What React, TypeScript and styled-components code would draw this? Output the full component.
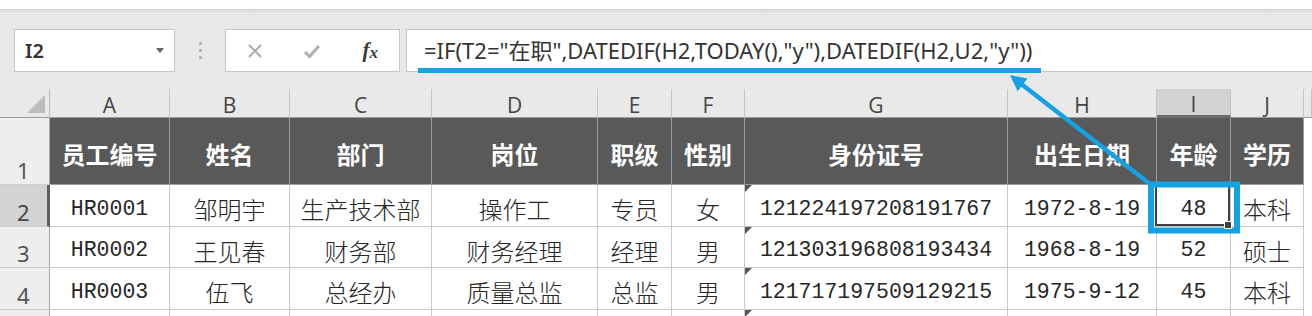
import styled, { createGlobalStyle, css } from 'styled-components'

const BLUE = '#14a2e2'

const GlobalStyle = createGlobalStyle`
  html, body {
    margin: 0;
    padding: 0;
    background: #fff;
  }
  body {
    font-family: "Noto Sans", "Noto Sans CJK SC", sans-serif;
  }
`

const Page = styled.div`
  position: relative;
  width: 1312px;
  height: 316px;
  overflow: hidden;
  padding-top: 9px;
  box-sizing: border-box;
  background: #fff;
`

const Toolbar = styled.div`
  display: flex;
  align-items: flex-start;
  height: 80px;
  box-sizing: border-box;
  padding: 19px 0 0 14px;
  border-top: 1px solid #d3d3d3;
  background: linear-gradient(#dcdcdc 0, #e7e7e7 4px, #e9e9e9 100%);
`

const NameBox = styled.div`
  display: flex;
  align-items: center;
  justify-content: space-between;
  width: 161px;
  height: 43px;
  box-sizing: border-box;
  padding: 0 10px 0 10px;
  background: #fff;
  border: 1px solid #c6c6c6;
`

const NameText = styled.span`
  font-size: 20px;
  font-weight: 600;
  color: #333;
`

const Caret = styled.span`
  width: 0;
  height: 0;
  border-left: 4px solid transparent;
  border-right: 4px solid transparent;
  border-top: 5px solid #666;
`

const Dots = styled.div`
  display: flex;
  flex-direction: column;
  align-items: center;
  justify-content: center;
  gap: 4px;
  width: 50px;
  height: 43px;
`

const Dot = styled.span`
  width: 3px;
  height: 3px;
  border-radius: 50%;
  background: #a9a9a9;
`

const FnBox = styled.div`
  display: grid;
  grid-template-columns: repeat(3, 1fr);
  align-items: center;
  justify-items: center;
  width: 175px;
  height: 43px;
  box-sizing: border-box;
  background: #fff;
  border: 1px solid #c6c6c6;
`

const FxMark = styled.span`
  font-family: "Liberation Serif", serif;
  font-style: italic;
  font-weight: 700;
  font-size: 21px;
  color: #3a3a3a;

  small {
    font-size: 17px;
    position: relative;
    top: 1px;
  }
`

const FormulaBox = styled.div`
  display: flex;
  align-items: flex-end;
  flex: 1;
  height: 43px;
  margin-left: 6px;
  margin-right: -2px;
  padding-left: 11px;
  box-sizing: border-box;
  background: #fff;
  border: 1px solid #c6c6c6;
`

const FormulaText = styled.span`
  display: inline-block;
  margin-bottom: -2px;
  padding: 0 9px 0 6px;
  font-size: 22px;
  line-height: 36px;
  color: #333;
  white-space: nowrap;
  border-bottom: 5px solid ${BLUE};
`

const Grid = styled.div`
  display: grid;
  grid-template-columns: 50px 120px 120px 142px 166px 74px 73px 263px 149px 74px 73px 1fr;
  grid-template-rows: 29px 67px 42px 41px 42px 20px;
`

const Base = css`
  position: relative;
  display: flex;
  align-items: center;
  justify-content: center;
  box-sizing: border-box;
  min-width: 0;
  white-space: nowrap;
  border-right: 1px solid;
  border-bottom: 1px solid;
`

const Corner = styled.div`
  ${Base};
  background: #e9e9e9;
  border-right-color: #bdbdbd;
  border-bottom-color: #9c9c9c;

  &::after {
    content: '';
    position: absolute;
    right: 4px;
    bottom: 4px;
    border-left: 18px solid transparent;
    border-bottom: 18px solid #bcbcbc;
  }
`

const ColHead = styled.div<{ $active?: boolean }>`
  ${Base};
  padding-top: 4px;
  font-family: "Open Sans", sans-serif;
  font-size: 21px;
  color: #444;
  background: ${(p) => (p.$active ? '#d3d3d3' : '#e9e9e9')};
  border-right-color: #c4c4c4;
  border-bottom: ${(p) => (p.$active ? '3px solid #6a6a6a' : '1px solid #9c9c9c')};
`

const RowHead = styled.div<{ $active?: boolean }>`
  ${Base};
  justify-content: flex-start;
  align-items: flex-end;
  padding: 0 0 1px 17px;
  font-size: 22px;
  line-height: 26px;
  color: ${(p) => (p.$active ? '#444' : '#555')};
  background: ${(p) => (p.$active ? '#d3d3d3' : '#eeeeee')};
  border-right: ${(p) => (p.$active ? '3px solid #5e5e5e' : '1px solid #a9a9a9')};
  border-bottom-color: #cdcdcd;
`

const HeadCell = styled.div`
  ${Base};
  padding-top: 5px;
  font-family: "Noto Sans CJK SC", sans-serif;
  font-size: 24px;
  font-weight: 700;
  color: #fff;
  background: #595959;
  border-right-color: #9d9d9d;
  border-bottom-color: #9d9d9d;
`

const DataCell = styled.div<{ $mono?: boolean; $flag?: boolean; $active?: boolean }>`
  ${Base};
  padding-top: 6px;
  color: #262626;
  background: #fff;
  border-right-color: #c9c9c9;
  border-bottom-color: #c9c9c9;
  font-family: ${(p) =>
    p.$mono ? '"Liberation Mono", monospace' : '"Noto Sans CJK SC", sans-serif'};
  font-size: ${(p) => (p.$mono ? '21.5px' : '24px')};
  font-weight: ${(p) => (p.$mono ? 400 : 300)};

  ${(p) =>
    p.$flag &&
    css`
      &::before {
        content: '';
        position: absolute;
        top: 0;
        left: 0;
        border-top: 7px solid #555;
        border-right: 7px solid transparent;
      }
    `}

  ${(p) =>
    p.$active &&
    css`
      &::after {
        content: '';
        position: absolute;
        inset: -1px 0 0 -2px;
        border: 2px solid #404040;
      }
      &::before {
        content: '';
        position: absolute;
        right: -2px;
        bottom: -3px;
        width: 6px;
        height: 6px;
        background: #404040;
        border: 1px solid #fff;
        z-index: 1;
      }
    `}
`

const Blank = styled.div`
  background: #fff;
`

const Overlay = styled.svg`
  position: absolute;
  top: 0;
  left: 0;
  pointer-events: none;
`

const cols = ['A', 'B', 'C', 'D', 'E', 'F', 'G', 'H', 'I', 'J']
const headers = ['员工编号', '姓名', '部门', '岗位', '职级', '性别', '身份证号', '出生日期', '年龄', '学历']
const rows = [
  ['HR0001', '邹明宇', '生产技术部', '操作工', '专员', '女', '121224197208191767', '1972-8-19', '48', '本科'],
  ['HR0002', '王见春', '财务部', '财务经理', '经理', '男', '121303196808193434', '1968-8-19', '52', '硕士'],
  ['HR0003', '伍飞', '总经办', '质量总监', '总监', '男', '121717197509129215', '1975-9-12', '45', '本科'],
]
const monoCols = [0, 6, 7, 8]

export default function App() {
  return (
    <Page>
      <GlobalStyle />
      <Toolbar>
        <NameBox>
          <NameText>I2</NameText>
          <Caret />
        </NameBox>
        <Dots>
          <Dot />
          <Dot />
          <Dot />
        </Dots>
        <FnBox>
          <svg width="16" height="16" viewBox="0 0 16 16">
            <path d="M2 2L14 14M14 2L2 14" stroke="#a6a6a6" strokeWidth="1.8" fill="none" />
          </svg>
          <svg width="18" height="16" viewBox="0 0 18 16">
            <path d="M2 9L6.5 13.5L16 3" stroke="#b0b0b0" strokeWidth="3" fill="none" />
          </svg>
          <FxMark>
            f<small>x</small>
          </FxMark>
        </FnBox>
        <FormulaBox>
          <FormulaText>=IF(T2="在职",DATEDIF(H2,TODAY(),"y"),DATEDIF(H2,U2,"y"))</FormulaText>
        </FormulaBox>
      </Toolbar>

      <Grid>
        <Corner />
        {cols.map((c) => (
          <ColHead key={c} $active={c === 'I'}>
            {c}
          </ColHead>
        ))}
        <ColHead />

        <RowHead>1</RowHead>
        {headers.map((h) => (
          <HeadCell key={h}>{h}</HeadCell>
        ))}
        <Blank />

        {rows.map((r, ri) => [
          <RowHead key={`rh${ri}`} $active={ri === 0}>
            {ri + 2}
          </RowHead>,
          ...r.map((v, ci) => (
            <DataCell
              key={`${ri}-${ci}`}
              $mono={monoCols.includes(ci)}
              $flag={ci === 6}
              $active={ri === 0 && ci === 8}
            >
              {v}
            </DataCell>
          )),
          <Blank key={`b${ri}`} />,
        ])}

        <RowHead />
        {cols.map((c) => (
          <DataCell key={`e${c}`} $flag={c === 'G'} />
        ))}
        <Blank />
      </Grid>

      <Overlay width="1312" height="316">
        <line x1="1020" y1="83" x2="1150" y2="184" stroke={BLUE} strokeWidth="4.5" />
        <polygon points="1010,75 1017.7,91.2 1027.5,78.6" fill={BLUE} />
        <rect x="1151" y="184.5" width="86" height="46" fill="none" stroke={BLUE} strokeWidth="6" />
      </Overlay>
    </Page>
  )
}
